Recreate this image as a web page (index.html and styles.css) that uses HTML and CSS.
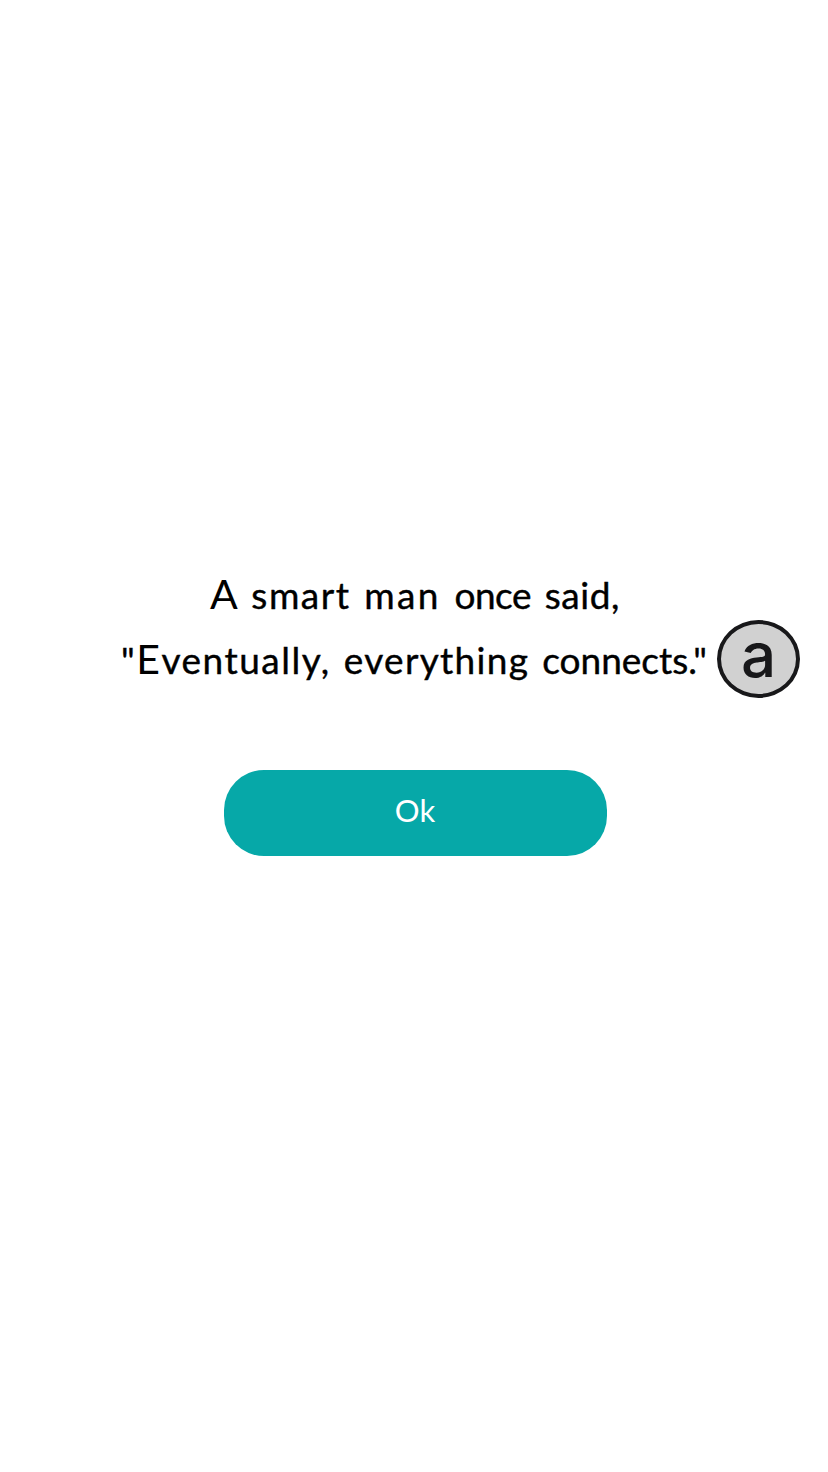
FILE: index.html
```html
<!DOCTYPE html>
<html lang="en">
<head>
<meta charset="utf-8">
<title>Quote</title>
<link rel="stylesheet" href="styles.css">
</head>
<body>
<main class="screen">
  <div class="quote">
    <p class="line line-intro"><span class="cap">A</span> <span class="smart">smart</span> <span class="man">man</span> <span class="once">once</span> <span class="said">said,</span></p>
    <p class="line line-saying"><span class="eventually">"<span class="cap">E</span>ventually,</span> <span class="everything">everything</span> <span class="connects">connects."</span></p>
    <span class="marker"><span class="marker-letter">a</span></span>
  </div>
  <button class="ok">Ok</button>
</main>
</body>
</html>
```

FILE: styles.css
```css
body {
  margin: 0;
  background: #fff;
  font-family: Lato, sans-serif;
}

.screen {
  display: flex;
  flex-direction: column;
  align-items: center;
  box-sizing: border-box;
  width: 828px;
  height: 1472px;
  padding: 562px 0 0;
}

.quote {
  position: relative;
  width: 828px;
}

.line {
  display: flex;
  align-items: baseline;
  justify-content: center;
  gap: 13px;
  height: 65px;
  margin: 0;
  color: #000;
  font-size: 37px;
  line-height: 65px;
  white-space: nowrap;
  -webkit-text-stroke: 0.4px #000;
}

.line-intro {
  gap: 13.7px;
  padding-left: 2px;
}

.cap {
  font-size: 41px;
  line-height: 64px;
  -webkit-text-stroke-width: 0;
}

.smart {
  letter-spacing: 1.5px;
}

.man {
  letter-spacing: 2.4px;
}

.once {
  letter-spacing: -0.5px;
}

.said {
  letter-spacing: 0.6px;
}

.eventually {
  letter-spacing: 1.5px;
}

.everything {
  letter-spacing: 1.3px;
}

.connects {
  letter-spacing: 0;
}

.marker {
  position: absolute;
  top: 58px;
  left: 717px;
  display: flex;
  justify-content: center;
  box-sizing: border-box;
  width: 83px;
  height: 78px;
  border: 4px solid #18181a;
  border-radius: 50%;
  background: #d1d1d1;
}

.marker-letter {
  color: #18181a;
  font: 500 62px/62px Inter, sans-serif;
}

.ok {
  width: 383px;
  height: 86px;
  margin: 78px 0 0 2px;
  padding: 0 0 6px;
  border: 0;
  border-radius: 40px;
  background: #06a8a8;
  color: #fff;
  font: 31px Lato, sans-serif;
}
```
